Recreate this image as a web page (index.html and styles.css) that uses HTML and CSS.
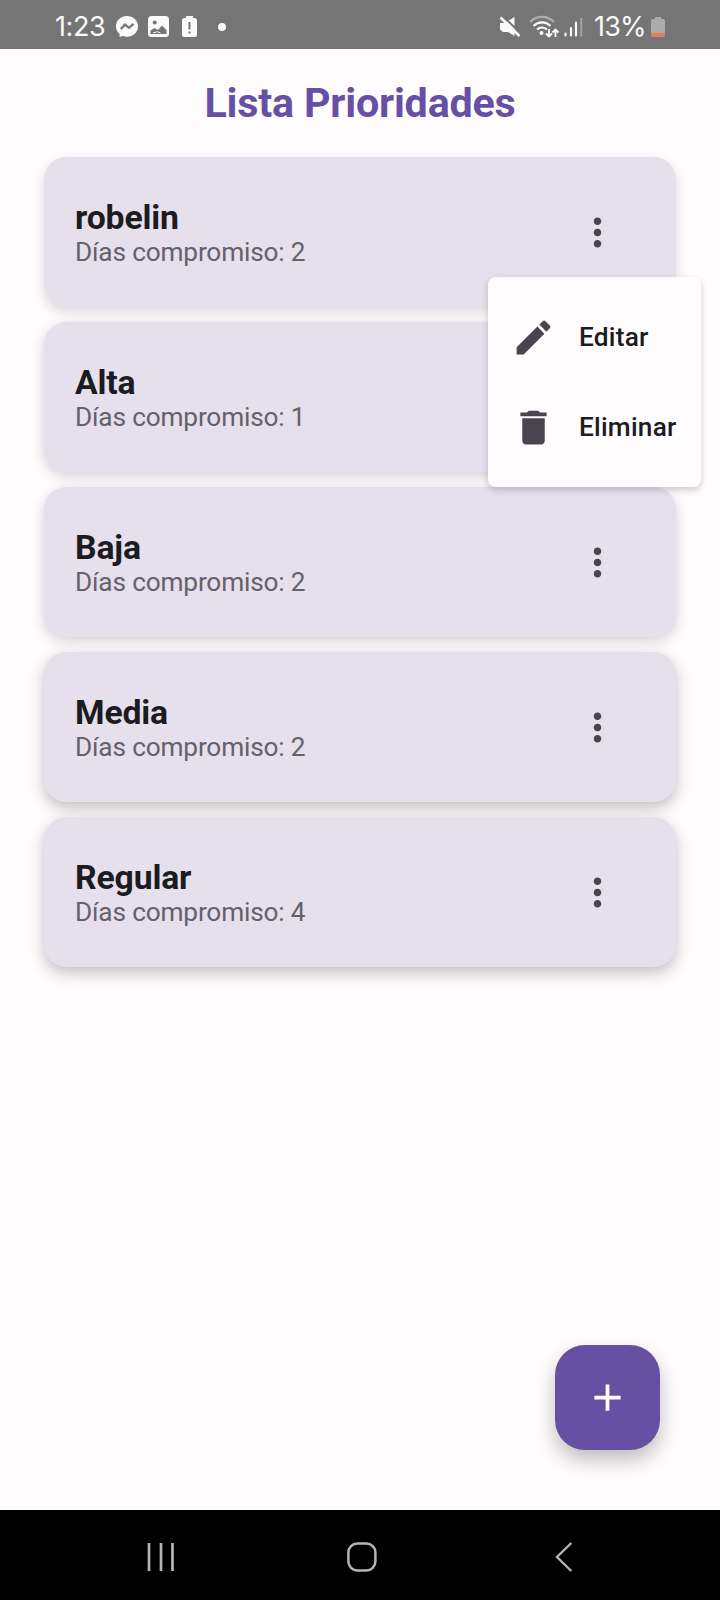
FILE: index.html
```html
<!DOCTYPE html>
<html lang="es">
<head>
<meta charset="utf-8">
<title>Lista Prioridades</title>
<link rel="stylesheet" href="styles.css">
</head>
<body>
<div class="screen">
  <header class="status">
    <div class="status-left">
      <span class="time">1:23</span>
      <svg class="i-msg" width="22" height="22" viewBox="0 0 22 22"><path fill="#fafafa" d="M11 0C4.800 0 0 4.500 0 10.300c0 3.200 1.400 5.900 3.600 7.800V21l3.100-.9c1.300.4 2.800.7 4.300.7 6.200 0 11-4.600 11-10.500S17.200 0 11 0z"/><path d="M4.800 13 9 8.600l4 3.200 4.500-4" fill="none" stroke="#757575" stroke-width="2.300"/></svg>
      <svg class="i-img" width="21" height="21" viewBox="0 0 21 21"><rect width="21" height="21" rx="3.500" fill="#fafafa"/><circle cx="6.700" cy="6.500" r="2" fill="#757575"/><path fill="#757575" d="M2.500 18v-3.500L6.500 12l3.500 2 4-4.500 4.500 4.500v4z"/><path d="M5 16.800l4.500-1 3 1.200" stroke="#fafafa" fill="none"/></svg>
      <svg class="i-bat" width="15" height="21" viewBox="0 0 15 21"><path fill="#fafafa" d="M4 0h7v2h1.500A2.500 2.500 0 0 1 15 4.500v14a2.500 2.500 0 0 1-2.500 2.500h-10A2.500 2.500 0 0 1 0 18.500v-14A2.500 2.500 0 0 1 2.500 2H4z"/><path stroke="#757575" stroke-width="2" d="M7.500 6v7.500M7.500 15.500v2"/></svg>
      <span class="dot"></span>
    </div>
    <div class="status-right">
      <svg width="22" height="22" viewBox="0 0 22 22"><path fill="#fafafa" d="M1 7h5L15.500 1v19L9 16H4L1 13.500z"/><path stroke="#757575" stroke-width="2" d="M4 .5 22 17.500"/><path stroke="#fafafa" stroke-width="2.700" d="M1.500 1.500 20.500 20"/></svg>
      <svg class="i-wifi" width="32" height="24" viewBox="0 0 32 24"><g fill="none" stroke="#fafafa" stroke-width="2.200"><path stroke="#acacac" d="M1 7C8 .2 18 .2 25 7"/><path d="M4.500 11c5-4.800 12-4.800 17 0"/><path d="M8 14.500c3-2.700 7-2.700 10 0"/><path stroke-width="1.900" d="M20 14v7.500M16.900 18.500l3.100 3 3.100-3M26.500 22v-7.500M23.500 17.500l3-3 3 3"/></g><circle cx="12.500" cy="18" r="2" fill="#fafafa"/></svg>
      <svg class="i-sig" width="19" height="20" viewBox="0 0 19 20"><path stroke="#fafafa" stroke-width="2.200" stroke-linecap="round" d="M1.500 16.500v2M7 11v7.500M12 5.500v13"/><path stroke="#a0a0a0" stroke-width="2.200" d="M17.200 1v18.500"/></svg>
      <span class="pct">13%</span>
      <svg width="14" height="20" viewBox="0 0 14 20"><path fill="#acacac" d="M4 0h6v2h2a2 2 0 0 1 2 2v12H0V4a2 2 0 0 1 2-2h2z"/><path fill="#e97a62" d="M0 16h14v2a2 2 0 0 1-2 2H2a2 2 0 0 1-2-2z"/></svg>
    </div>
  </header>
  <main class="app">
    <h1 class="title">Lista Prioridades</h1>
    <div class="list">
      <article class="card"><div class="info"><h2 class="name">robelin</h2><p class="days">Días compromiso: 2</p></div>
        <svg class="more" viewBox="0 0 24 24"><path d="M12 8c1.100 0 2-.9 2-2s-.9-2-2-2-2 .9-2 2 .9 2 2 2zm0 2c-1.100 0-2 .9-2 2s.9 2 2 2 2-.9 2-2-.9-2-2-2zm0 6c-1.100 0-2 .9-2 2s.9 2 2 2 2-.9 2-2-.9-2-2-2z"/></svg>
        <div class="menu">
          <div class="item"><svg class="icon" viewBox="0 0 24 24"><path d="M3 17.250V21h3.750L17.810 9.940l-3.750-3.750L3 17.250zM20.710 7.040c.39-.39.39-1.020 0-1.410l-2.340-2.340c-.39-.39-1.020-.39-1.410 0l-1.830 1.830 3.750 3.750 1.830-1.830z"/></svg><span>Editar</span></div>
          <div class="item"><svg class="icon" viewBox="0 0 24 24"><path d="M6 19c0 1.100.9 2 2 2h8c1.100 0 2-.9 2-2V7H6v12zM19 4h-3.500l-1-1h-5l-1 1H5v2h14V4z"/></svg><span>Eliminar</span></div>
        </div>
      </article>
      <article class="card"><div class="info"><h2 class="name">Alta</h2><p class="days">Días compromiso: 1</p></div></article>
      <article class="card"><div class="info"><h2 class="name">Baja</h2><p class="days">Días compromiso: 2</p></div><svg class="more" viewBox="0 0 24 24"><path d="M12 8c1.100 0 2-.9 2-2s-.9-2-2-2-2 .9-2 2 .9 2 2 2zm0 2c-1.100 0-2 .9-2 2s.9 2 2 2 2-.9 2-2-.9-2-2-2zm0 6c-1.100 0-2 .9-2 2s.9 2 2 2 2-.9 2-2-.9-2-2-2z"/></svg></article>
      <article class="card low"><div class="info"><h2 class="name">Media</h2><p class="days">Días compromiso: 2</p></div><svg class="more" viewBox="0 0 24 24"><path d="M12 8c1.100 0 2-.9 2-2s-.9-2-2-2-2 .9-2 2 .9 2 2 2zm0 2c-1.100 0-2 .9-2 2s.9 2 2 2 2-.9 2-2-.9-2-2-2zm0 6c-1.100 0-2 .9-2 2s.9 2 2 2 2-.9 2-2-.9-2-2-2z"/></svg></article>
      <article class="card low"><div class="info"><h2 class="name">Regular</h2><p class="days">Días compromiso: 4</p></div><svg class="more" viewBox="0 0 24 24"><path d="M12 8c1.100 0 2-.9 2-2s-.9-2-2-2-2 .9-2 2 .9 2 2 2zm0 2c-1.100 0-2 .9-2 2s.9 2 2 2 2-.9 2-2-.9-2-2-2zm0 6c-1.100 0-2 .9-2 2s.9 2 2 2 2-.9 2-2-.9-2-2-2z"/></svg></article>
    </div>
    <div class="fab"><svg width="45" height="45" viewBox="0 0 24 24"><path fill="#fff" d="M19 13h-6v6h-2v-6H5v-2h6V5h2v6h6z"/></svg></div>
  </main>
  <nav class="nav">
    <svg width="28" height="30" viewBox="0 0 28 30"><path stroke="#b5b5b5" stroke-width="2.700" d="M2 1v28M14 1v28M25.500 1v28"/></svg>
    <svg class="home" width="30" height="30" viewBox="0 0 30 30"><rect x="1.400" y="1.400" width="27" height="27" rx="9" fill="none" stroke="#b5b5b5" stroke-width="2.500"/></svg>
    <svg class="back" width="18" height="30" viewBox="0 0 18 30"><path fill="none" stroke="#b5b5b5" stroke-width="2.400" d="M16.300 1 2 15l14.300 14"/></svg>
  </nav>
</div>
</body>
</html>
```

FILE: styles.css
```css
* { box-sizing: border-box; margin: 0; padding: 0; }
body { margin: 0; font-family: Roboto, "Liberation Sans", sans-serif; }
svg { display: block; flex: none; }
.screen { width: 720px; height: 1600px; display: flex; flex-direction: column; background: #fffcfe; overflow: hidden; }
.status { height: 49px; flex: none; background: #757575; color: #fafafa; display: flex; justify-content: space-between; padding: 4px 55px 0 55px; font-family: Inter, Roboto, sans-serif; font-size: 27px; }
.status-left, .status-right { display: flex; align-items: center; }
.time { width: 61px; letter-spacing: -0.4px; }
.i-img { margin-left: 10px; }
.i-bat { margin-left: 13px; }
.dot { width: 8px; height: 8px; border-radius: 50%; background: #fafafa; margin-left: 21px; }
.i-wifi { margin-left: 8px; }
.i-sig { margin-left: 3px; }
.pct { margin-left: 11px; width: 57px; letter-spacing: -0.8px; }
.app { flex: 1; display: flex; flex-direction: column; }
.title { height: 108px; line-height: 108px; text-align: center; color: #6650a4; font-size: 41.25px; font-weight: 700; letter-spacing: -.2px; }
.list { padding: 0 44px; display: flex; flex-direction: column; gap: 15px; }
.card { position: relative; height: 150px; border-radius: 22.5px; background: #e5e0ec; display: flex; align-items: center; justify-content: space-between; padding: 0 56px 0 31px; box-shadow: 0 4px 13px rgba(70, 50, 45, .22); }
.card:first-child { z-index: 1; box-shadow: 0 5px 12px rgba(70, 50, 45, .18); }
.low { box-shadow: 0 6px 15px rgba(60, 45, 45, .3); }
.info { padding-top: 6px; }
.name { font-size: 33.75px; line-height: 34px; font-weight: 700; letter-spacing: -.15px; color: #1c1b1f; }
.days { font-size: 26.25px; line-height: 34px; letter-spacing: -.18px; color: #65616b; }
.more { width: 45px; height: 45px; fill: #49454f; }
.menu { position: absolute; left: 444px; top: 120px; width: 213px; height: 210px; padding: 15px 0 15px 23px; border-radius: 7.5px; background: #fffcfe; box-shadow: 0 3px 7px rgba(0, 0, 0, .2); }
.item { height: 90px; display: flex; align-items: center; gap: 23px; font-size: 26.25px; font-weight: 500; letter-spacing: .22px; color: #1c1b1f; }
.icon { width: 45px; height: 45px; fill: #49454f; }
.fab { width: 105px; height: 105px; margin: auto 60px 60px auto; border-radius: 30px; background: #6650a4; display: flex; align-items: center; justify-content: center; box-shadow: 0 10px 20px rgba(0, 0, 0, .25); }
.nav { height: 90px; flex: none; background: #000; display: flex; padding: 32px 147px 0; }
.home { margin-left: 172px; }
.back { margin-left: auto; }
```
